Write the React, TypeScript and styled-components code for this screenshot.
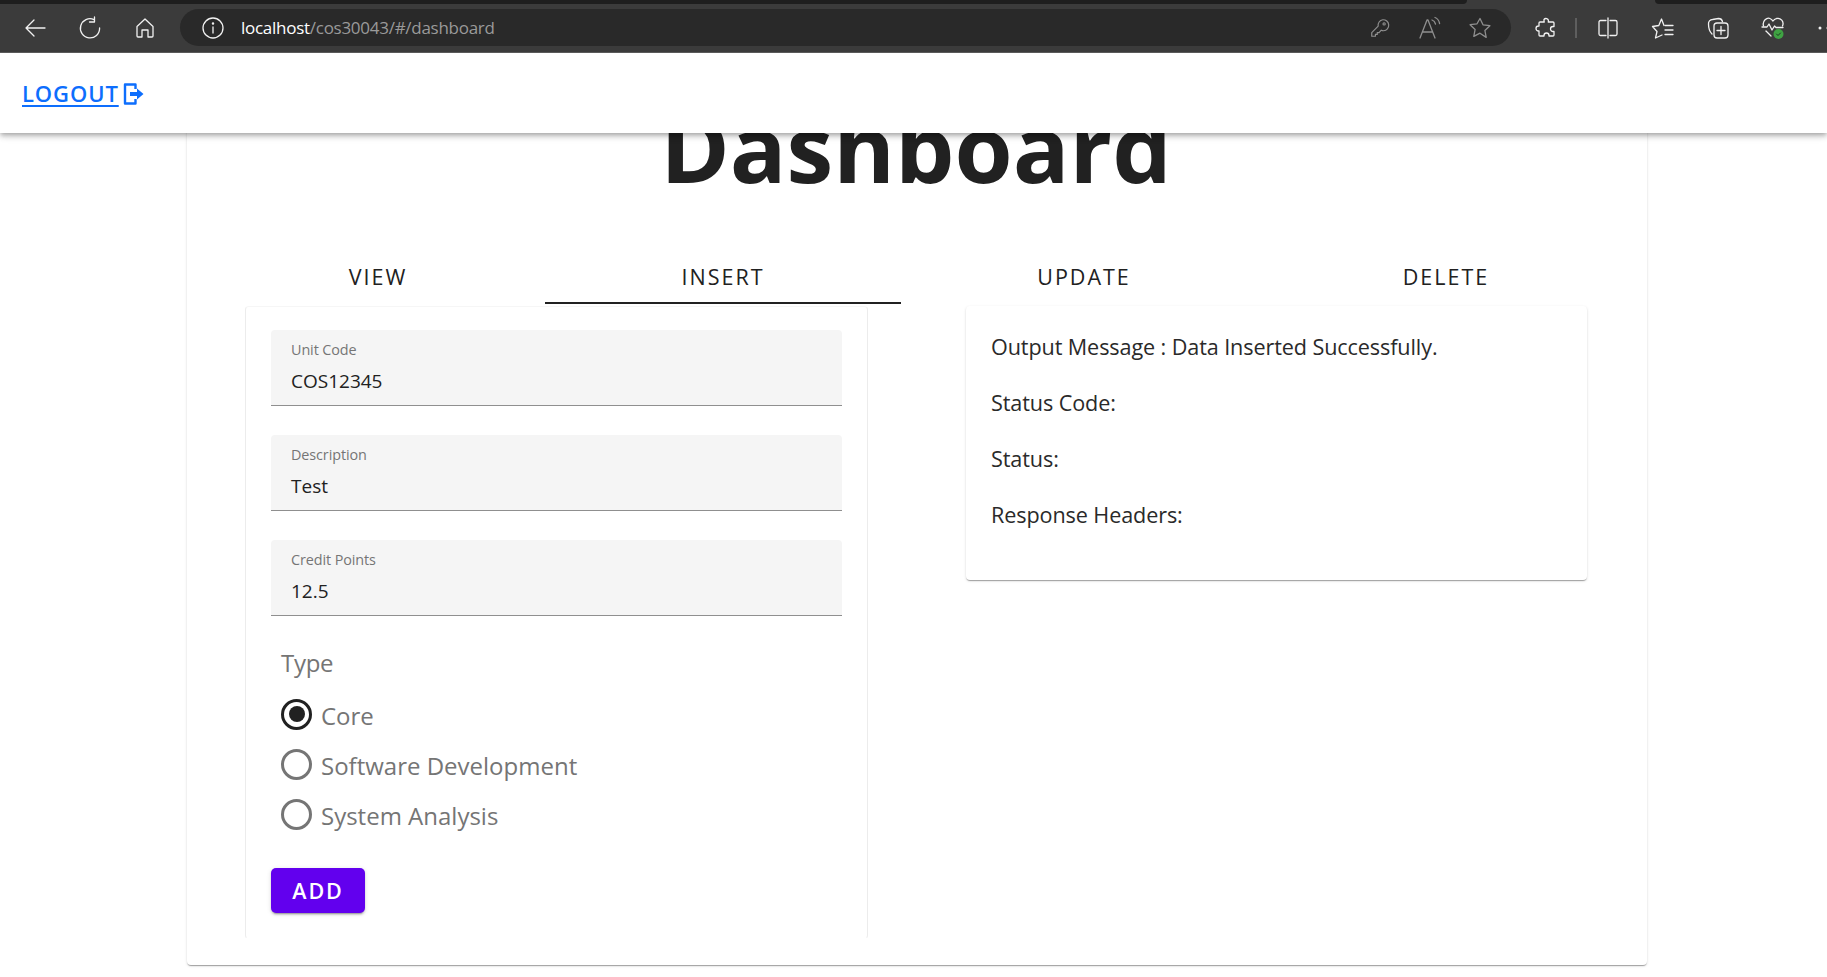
import React from "react";
import styled, { createGlobalStyle } from "styled-components";

const Global = createGlobalStyle`
  html, body { margin: 0; padding: 0; height: 100%; overflow: hidden; background: #fff; }
  body { font-family: "Open Sans", "Noto Sans", "Liberation Sans", sans-serif; color: #212121; }
  * { box-sizing: border-box; }
`;

const Shell = styled.div`
  width: 1827px;
  height: 977px;
  overflow: hidden;
  display: flex;
  flex-direction: column;
`;

const Chrome = styled.div`
  position: relative;
  z-index: 3;
  height: 53px;
  flex: none;
  background: #3b3b3b;
  border-bottom: 1px solid #5a5a5a;
  overflow: hidden;
`;

const TabStrip = styled.div`
  height: 4px;
  display: flex;
  justify-content: space-between;
`;

const TabEdge = styled.div<{ $w: number; $side: "l" | "r" }>`
  width: ${(p) => p.$w}px;
  height: 4px;
  background: #1e1e1e;
  border-radius: ${(p) => (p.$side === "l" ? "0 0 6px 0" : "0 0 0 6px")};
`;

const Toolbar = styled.div`
  height: 46px;
  width: 1900px;
  display: flex;
  align-items: center;
  padding: 1px 0 0 7px;
`;

const ToolButton = styled.div`
  width: 55px;
  height: 37px;
  flex: none;
  display: flex;
  align-items: center;
  justify-content: center;
`;

const Address = styled.div`
  width: 1331px;
  height: 37px;
  flex: none;
  margin: 0 7px 0 8px;
  border-radius: 19px;
  background: #292929;
  display: flex;
  align-items: center;
  padding: 0 6px 0 21px;
  font-size: 17px;
  letter-spacing: -0.27px;
`;

const Host = styled.span`
  color: #fff;
  margin-left: 16px;
`;

const Path = styled.span`
  color: #9a9a9a;
  flex: 1;
`;

const PillIcon = styled.div`
  width: 50px;
  display: flex;
  justify-content: center;
`;

const Divider = styled.div`
  width: 2px;
  height: 20px;
  flex: none;
  margin: 0 3px 0 2px;
  background: #5e5e5e;
`;

const Header = styled.header`
  position: relative;
  z-index: 2;
  height: 80px;
  flex: none;
  background: #fff;
  box-shadow: 0 2px 4px -1px rgba(0, 0, 0, 0.2), 0 4px 5px rgba(0, 0, 0, 0.14), 0 1px 10px rgba(0, 0, 0, 0.12);
  display: flex;
  align-items: center;
  padding: 0 0 1px 22px;
`;

const Logout = styled.a`
  display: flex;
  align-items: center;
  gap: 4px;
  color: #0d6efd;
  font-size: 22px;
  font-weight: 600;
  letter-spacing: 0.9px;
  text-decoration: underline;
  text-decoration-thickness: 2px;
  text-underline-offset: 3px;
  svg {
    margin-top: 2px;
  }
`;

const Page = styled.main`
  flex: 1;
  padding: 0 180px 0 187px;
`;

const Board = styled.section`
  margin-top: -60px;
  height: 892px;
  width: 1460px;
  background: #fff;
  border-radius: 4px;
  box-shadow: 0 2px 1px -1px rgba(0, 0, 0, 0.2), 0 1px 1px rgba(0, 0, 0, 0.14), 0 1px 3px rgba(0, 0, 0, 0.12);
  padding: 0 22px 0 24px;
`;

const Title = styled.h1`
  margin: 0;
  height: 169px;
  padding-right: 4px;
  text-align: center;
  font-size: 94px;
  line-height: 149px;
  font-weight: 700;
  color: #212121;
`;

const Tabs = styled.nav`
  margin-top: 14px;
  display: grid;
  grid-template-columns: 334fr 356fr 366fr 358fr;
  height: 48px;
`;

const Tab = styled.div<{ $active?: boolean }>`
  display: flex;
  align-items: center;
  justify-content: center;
  padding-bottom: 6px;
  font-size: 21.5px;
  font-weight: 500;
  letter-spacing: 2px;
  color: #212121;
  border-bottom: 2px solid ${(p) => (p.$active ? "#212121" : "transparent")};
`;

const Panels = styled.div`
  display: flex;
  justify-content: space-between;
  align-items: flex-start;
  padding: 2px 38px 0 34px;
`;

const Card = styled.div`
  background: #fff;
  border-radius: 4px;
  box-shadow: 0 2px 1px -1px rgba(0, 0, 0, 0.2), 0 1px 1px rgba(0, 0, 0, 0.14), 0 1px 3px rgba(0, 0, 0, 0.12);
`;

const FormCard = styled(Card)`
  width: 623px;
  height: 633px;
  padding: 23px 25px 0 25px;
  box-shadow: none;
  border: 1px solid #ececec;
  border-top-color: #f6f6f6;
  border-bottom-color: transparent;
`;

const Field = styled.div`
  height: 76px;
  margin-bottom: 29px;
  background: #f5f5f5;
  border-radius: 4px 4px 0 0;
  border-bottom: 1px solid #8f8f8f;
  padding: 10px 20px 0;
`;

const FieldLabel = styled.div`
  font-size: 14.4px;
  line-height: 20px;
  letter-spacing: -0.1px;
  color: #757575;
`;

const FieldValue = styled.div`
  margin-top: 7px;
  font-size: 19px;
  line-height: 28px;
  color: #212121;
`;

const GroupLabel = styled.div`
  margin: 6px 0 9px 10px;
  height: 36px;
  font-size: 24px;
  line-height: 36px;
  letter-spacing: -0.3px;
  color: #757575;
`;

const RadioRow = styled.div`
  display: flex;
  align-items: center;
  gap: 9px;
  height: 50px;
  margin-left: 10px;
  font-size: 24px;
  color: #757575;
`;

const RadioDot = styled.span<{ $on?: boolean }>`
  width: 31px;
  height: 31px;
  flex: none;
  margin-top: -2px;
  border-radius: 50%;
  border: 3px solid ${(p) => (p.$on ? "#212121" : "#757575")};
  display: flex;
  align-items: center;
  justify-content: center;
  &::after {
    content: "";
    display: ${(p) => (p.$on ? "block" : "none")};
    width: 16px;
    height: 16px;
    border-radius: 50%;
    background: #212121;
  }
`;

const AddButton = styled.div`
  margin-top: 28px;
  width: 94px;
  height: 45px;
  border-radius: 5px;
  background: #6200ee;
  color: #fff;
  font-size: 21.5px;
  font-weight: 600;
  letter-spacing: 1.9px;
  display: flex;
  align-items: center;
  justify-content: center;
  box-shadow: 0 3px 1px -2px rgba(0, 0, 0, 0.2), 0 2px 2px rgba(0, 0, 0, 0.14), 0 1px 5px rgba(0, 0, 0, 0.12);
`;

const OutputCard = styled(Card)`
  width: 621px;
  height: 274px;
  padding: 13px 25px 0;
`;

const OutputLine = styled.p`
  margin: 0;
  height: 56px;
  font-size: 21.6px;
  line-height: 56px;
  letter-spacing: -0.1px;
  color: #2a2a2a;
`;

const Tool = ({ size = 24, stroke = "#f1f1f1", children }: { size?: number; stroke?: string; children: React.ReactNode }) => (
  <svg width={size} height={size} viewBox="0 0 24 24" fill="none" stroke={stroke} strokeWidth={1.3} strokeLinecap="round" strokeLinejoin="round">
    {children}
  </svg>
);

export default function App() {
  return (
    <Shell>
      <Global />
      <Chrome>
        <TabStrip>
          <TabEdge $w={1467} $side="l" />
          <TabEdge $w={172} $side="r" />
        </TabStrip>
        <Toolbar>
          <ToolButton>
            <Tool><path d="M22 12H3M11 4l-8 8 8 8" /></Tool>
          </ToolButton>
          <ToolButton>
            <Tool><path d="M16 3.600A9.600 9.600 0 1 0 21.600 12M16.500 1v5h-5" /></Tool>
          </ToolButton>
          <ToolButton>
            <Tool><path d="M4 10.500 12 3l8 7.500V20a1 1 0 0 1-1 1h-4v-7H9v7H5a1 1 0 0 1-1-1z" /></Tool>
          </ToolButton>
          <Address>
            <Tool><circle cx="12" cy="12" r="10" /><path d="M12 11v6" /><circle cx="12" cy="7.500" r=".6" fill="#f1f1f1" /></Tool>
            <Host>localhost</Host>
            <Path>/cos30043/#/dashboard</Path>
            <PillIcon>
              <Tool size={22} stroke="#8f8f8f">
                <path d="M15 3a6 6 0 0 1 1 12c-1 0-2-.2-2.600-.6L11 17H9v2H7v2H3v-4l7-7A6 6 0 0 1 15 3z" />
                <circle cx="16.500" cy="7.500" r="1.200" />
              </Tool>
            </PillIcon>
            <PillIcon>
              <Tool stroke="#8f8f8f">
                <path d="M2 22 9 4h1l7 18M5 16h9.500" />
                <path d="M14 4c2 .6 3 2 3.500 4M17 1.500c2.500 1 4 3 4.600 6" />
              </Tool>
            </PillIcon>
            <PillIcon>
              <Tool stroke="#8f8f8f"><path d="m12 2.500 3 6.300 6.900.9-5 4.800 1.300 6.900L12 17.200l-6.200 3.200 1.300-6.900-5-4.800 6.900-.9z" /></Tool>
            </PillIcon>
          </Address>
          <ToolButton>
            <Tool><path d="M10 3.500a2.500 2.500 0 0 1 4.500 1.500c0 .4-.1.7-.3 1H19a1 1 0 0 1 1 1v3.500h-1a2.500 2.500 0 0 0 0 5h1V19a1 1 0 0 1-1 1h-4v-.5a2.500 2.500 0 0 0-5 0v.5H6a1 1 0 0 1-1-1v-4h-.5a2.500 2.500 0 0 1 0-5H5V7a1 1 0 0 1 1-1h4.300c-.2-.4-.3-.8-.3-1.300 0-.4 0-.8 0-1.200z" /></Tool>
          </ToolButton>
          <Divider />
          <ToolButton>
            <Tool><path d="M10 4.500H4.500A1.500 1.500 0 0 0 3 6v12a1.500 1.500 0 0 0 1.500 1.500H10M14 4.500h5.500A1.500 1.500 0 0 1 21 6v12a1.500 1.500 0 0 1-1.500 1.500H14M12 2v20" /></Tool>
          </ToolButton>
          <ToolButton>
            <Tool><path d="M13 9.500 10.500 3 7.800 9.500 1.500 10.500 6 15.500 4.500 22 11 19" /><path d="M14 9.500h8M14 14h8M14 18.500h8" /></Tool>
          </ToolButton>
          <ToolButton>
            <Tool><path d="M6 18C4 16 2.500 12 2.500 8A4 4 0 0 1 6.500 3.500l6-1c2 0 3.500 1 4 3" /><rect x="8" y="7" width="14" height="15" rx="3" /><path d="M15 10.500v8M11 14.500h8" /></Tool>
          </ToolButton>
          <ToolButton>
            <svg width="24" height="24" viewBox="0 0 24 24" fill="none" stroke="#f1f1f1" strokeWidth="1.300" strokeLinecap="round" strokeLinejoin="round">
              <path d="M2.500 10C1 5 6 1 9 2.500c1.500.7 2.500 1.800 3 2.500.7-1 2-2 3.500-2.500 4-1 8 3 6 7.500" />
              <path d="M1 11h5l2-3 3 6 2.500-4 1.500 1.500h7" />
              <path d="m5 15 5 5" />
              <circle cx="17.500" cy="18" r="5" fill="#3fa343" stroke="none" />
              <path d="m15.500 18 1.500 1.500 2.500-2.500" stroke="#1e3a1e" strokeWidth="1" />
            </svg>
          </ToolButton>
          <ToolButton>
            <svg width="24" height="24" viewBox="0 0 24 24" fill="#f1f1f1">
              <circle cx="4" cy="12" r="1.500" /><circle cx="12" cy="12" r="1.500" /><circle cx="20" cy="12" r="1.500" />
            </svg>
          </ToolButton>
        </Toolbar>
      </Chrome>
      <Header>
        <Logout>
          LOGOUT
          <svg width="21" height="24" viewBox="0 0 21 24" fill="none">
            <path d="M12.500 7V2.500H2v19h10.500V17" stroke="#0d6efd" strokeWidth="2.400" strokeLinejoin="round" />
            <path d="M7 10h7V6.500l6.500 5.500-6.500 5.500V14H7z" fill="#0d6efd" />
          </svg>
        </Logout>
      </Header>
      <Page>
        <Board>
          <Title>Dashboard</Title>
          <Tabs>
            <Tab>VIEW</Tab>
            <Tab $active>INSERT</Tab>
            <Tab>UPDATE</Tab>
            <Tab>DELETE</Tab>
          </Tabs>
          <Panels>
            <FormCard>
              <Field>
                <FieldLabel>Unit Code</FieldLabel>
                <FieldValue>COS12345</FieldValue>
              </Field>
              <Field>
                <FieldLabel>Description</FieldLabel>
                <FieldValue>Test</FieldValue>
              </Field>
              <Field>
                <FieldLabel>Credit Points</FieldLabel>
                <FieldValue>12.5</FieldValue>
              </Field>
              <GroupLabel>Type</GroupLabel>
              <RadioRow><RadioDot $on />Core</RadioRow>
              <RadioRow><RadioDot />Software Development</RadioRow>
              <RadioRow><RadioDot />System Analysis</RadioRow>
              <AddButton>ADD</AddButton>
            </FormCard>
            <OutputCard>
              <OutputLine>Output Message : Data Inserted Successfully.</OutputLine>
              <OutputLine>Status Code:</OutputLine>
              <OutputLine>Status:</OutputLine>
              <OutputLine>Response Headers:</OutputLine>
            </OutputCard>
          </Panels>
        </Board>
      </Page>
    </Shell>
  );
}
